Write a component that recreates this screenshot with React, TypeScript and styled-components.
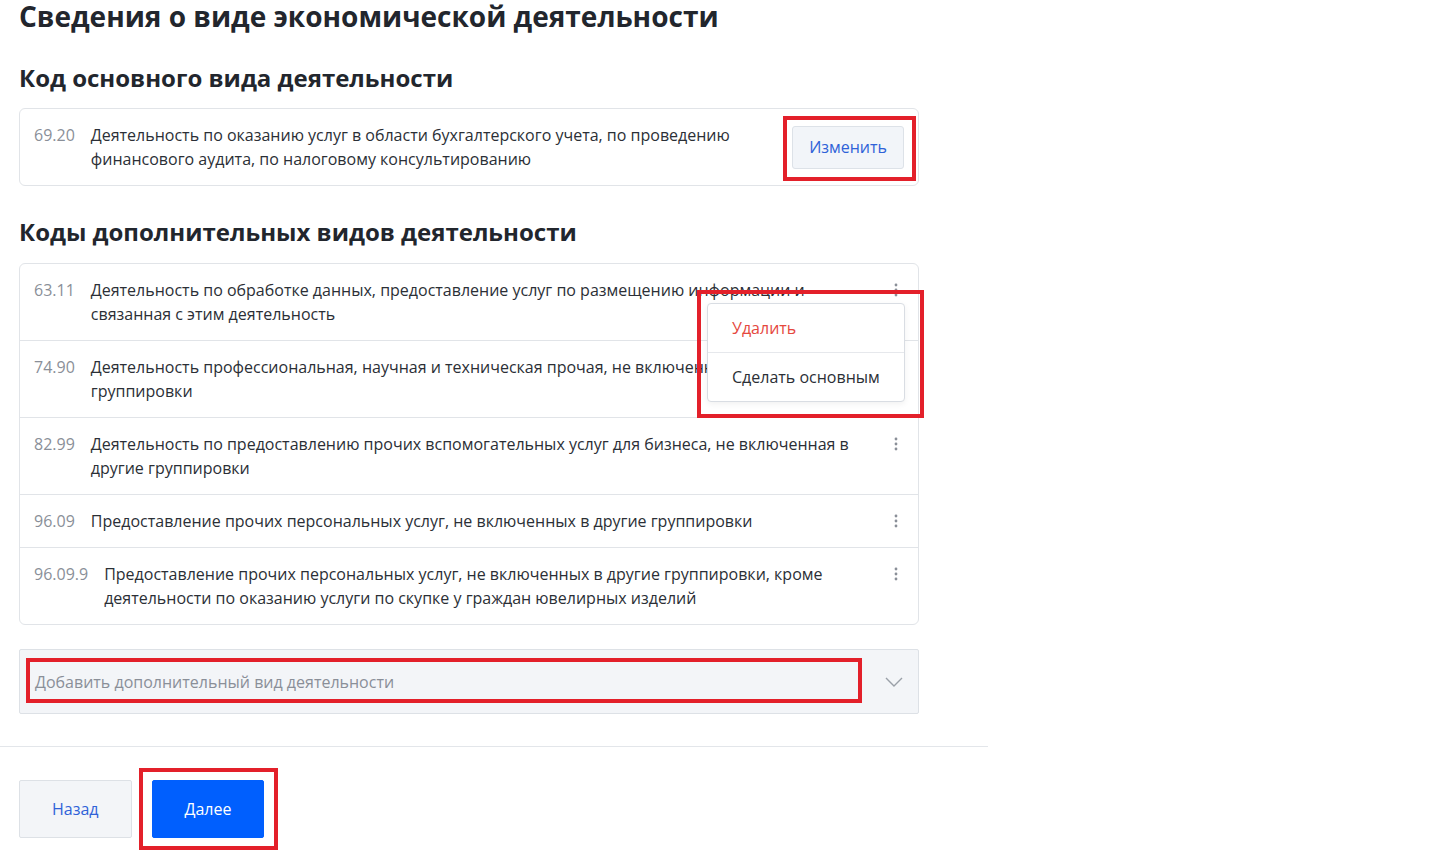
import React from 'react'
import styled, { createGlobalStyle } from 'styled-components'

const GlobalStyle = createGlobalStyle`
  body {
    margin: 0;
    background: #fff;
    font-family: "Open Sans", "Noto Sans", sans-serif;
    color: #2b2f36;
  }
`

const Page = styled.div`
  width: 988px;
  min-height: 861px;
  position: relative;
`

const Content = styled.div`
  padding: 0 0 0 19px;
  width: 900px;
`

const Title = styled.h1`
  margin: 0;
  font-size: 28px;
  line-height: 32px;
  font-weight: 700;
  color: #22262d;
`

const SectionTitle = styled.h2<{ $after?: number }>`
  margin: 30px 0 ${p => p.$after ?? 14}px;
  font-size: 24px;
  line-height: 32px;
  font-weight: 700;
  color: #22262d;
`

const Card = styled.div`
  border: 1px solid #e1e4e8;
  border-radius: 6px;
  background: #fff;
`

const Row = styled.div`
  display: flex;
  align-items: flex-start;
  padding: 14px;
  & + & {
    border-top: 1px solid #e1e4e8;
  }
`

const Code = styled.span`
  flex: none;
  color: #8a8f98;
  font-size: 16px;
  line-height: 24px;
  margin-right: 16px;
`

const Text = styled.span`
  flex: 1;
  font-size: 16px;
  line-height: 24px;
  color: #2b2f36;
  padding-right: 30px;
`

const ChangeButton = styled.button`
  flex: none;
  align-self: center;
  height: 43px;
  padding: 0 16px;
  background: #f2f5f9;
  border: 1px solid #dde2e8;
  border-radius: 3px;
  color: #2f62d8;
  font-family: inherit;
  font-size: 16px;
`

const Kebab = styled.div`
  flex: none;
  width: 20px;
  height: 24px;
  display: flex;
  align-items: center;
  justify-content: center;
  margin-right: -2px;
`

const Select = styled.div`
  margin-top: 24px;
  height: 63px;
  display: flex;
  align-items: center;
  justify-content: space-between;
  padding: 0 15px;
  background: #f3f5f8;
  border: 1px solid #dde1e6;
  border-radius: 2px;
  color: #8a8f98;
  font-size: 16px;
`

const Divider = styled.hr`
  margin: 32px 0 0;
  border: none;
  border-top: 1px solid #e3e6ea;
`

const Footer = styled.div`
  display: flex;
  gap: 20px;
  padding: 33px 0 22px 19px;
`

const Button = styled.button<{ primary?: boolean }>`
  height: 58px;
  padding: 0 32px;
  border-radius: 2px;
  font-family: inherit;
  font-size: 16px;
  background: ${p => (p.primary ? '#005ffe' : '#f3f5f8')};
  color: ${p => (p.primary ? '#fff' : '#2f62d8')};
  border: 1px solid ${p => (p.primary ? '#005ffe' : '#dde1e6')};
`

const Menu = styled.div`
  position: absolute;
  left: 707px;
  top: 303px;
  width: 196px;
  background: #fff;
  border: 1px solid #d9dde3;
  border-radius: 4px;
  box-shadow: 0 2px 6px rgba(0, 0, 0, 0.06);
`

const MenuItem = styled.div<{ danger?: boolean }>`
  height: 48px;
  display: flex;
  align-items: center;
  padding: 0 24px;
  font-size: 16px;
  color: ${p => (p.danger ? '#e5483e' : '#2b2f36')};
  & + & {
    border-top: 1px solid #e6e8ec;
  }
`

const Mark = styled.div<{ x: number; y: number; w: number; h: number }>`
  position: absolute;
  left: ${p => p.x}px;
  top: ${p => p.y}px;
  width: ${p => p.w}px;
  height: ${p => p.h}px;
  border: 4px solid #e3202a;
  box-sizing: border-box;
  pointer-events: none;
`

const Dots = () => (
  <svg width="4" height="14" viewBox="0 0 4 14">
    <circle cx="2" cy="2" r="1.4" fill="#8a8f98" />
    <circle cx="2" cy="7" r="1.4" fill="#8a8f98" />
    <circle cx="2" cy="12" r="1.4" fill="#8a8f98" />
  </svg>
)

const Chevron = () => (
  <svg width="18" height="10" viewBox="0 0 18 10">
    <path d="M1 1l8 8 8-8" fill="none" stroke="#9aa0a8" strokeWidth="1.4" />
  </svg>
)

const extra = [
  ['63.11', 'Деятельность по обработке данных, предоставление услуг по размещению информации и связанная с этим деятельность'],
  ['74.90', 'Деятельность профессиональная, научная и техническая прочая, не включенная в другие группировки'],
  ['82.99', 'Деятельность по предоставлению прочих вспомогательных услуг для бизнеса, не включенная в другие группировки'],
  ['96.09', 'Предоставление прочих персональных услуг, не включенных в другие группировки'],
  ['96.09.9', 'Предоставление прочих персональных услуг, не включенных в другие группировки, кроме деятельности по оказанию услуги по скупке у граждан ювелирных изделий'],
]

export default function App() {
  return (
    <Page>
      <GlobalStyle />
      <Content>
        <Title>Сведения о виде экономической деятельности</Title>
        <SectionTitle>Код основного вида деятельности</SectionTitle>
        <Card>
          <Row>
            <Code>69.20</Code>
            <Text>
              Деятельность по оказанию услуг в области бухгалтерского учета, по проведению
              финансового аудита, по налоговому консультированию
            </Text>
            <ChangeButton>Изменить</ChangeButton>
          </Row>
        </Card>
        <SectionTitle $after={15}>Коды дополнительных видов деятельности</SectionTitle>
        <Card>
          {extra.map(([code, text]) => (
            <Row key={code}>
              <Code>{code}</Code>
              <Text>{text}</Text>
              <Kebab>
                <Dots />
              </Kebab>
            </Row>
          ))}
        </Card>
        <Select>
          <span>Добавить дополнительный вид деятельности</span>
          <Chevron />
        </Select>
      </Content>
      <Divider />
      <Footer>
        <Button>Назад</Button>
        <Button primary>Далее</Button>
      </Footer>
      <Menu>
        <MenuItem danger>Удалить</MenuItem>
        <MenuItem>Сделать основным</MenuItem>
      </Menu>
      <Mark x={783} y={116} w={133} h={65} />
      <Mark x={697} y={290} w={227} h={128} />
      <Mark x={26} y={658} w={836} h={45} />
      <Mark x={139} y={768} w={139} h={82} />
    </Page>
  )
}
